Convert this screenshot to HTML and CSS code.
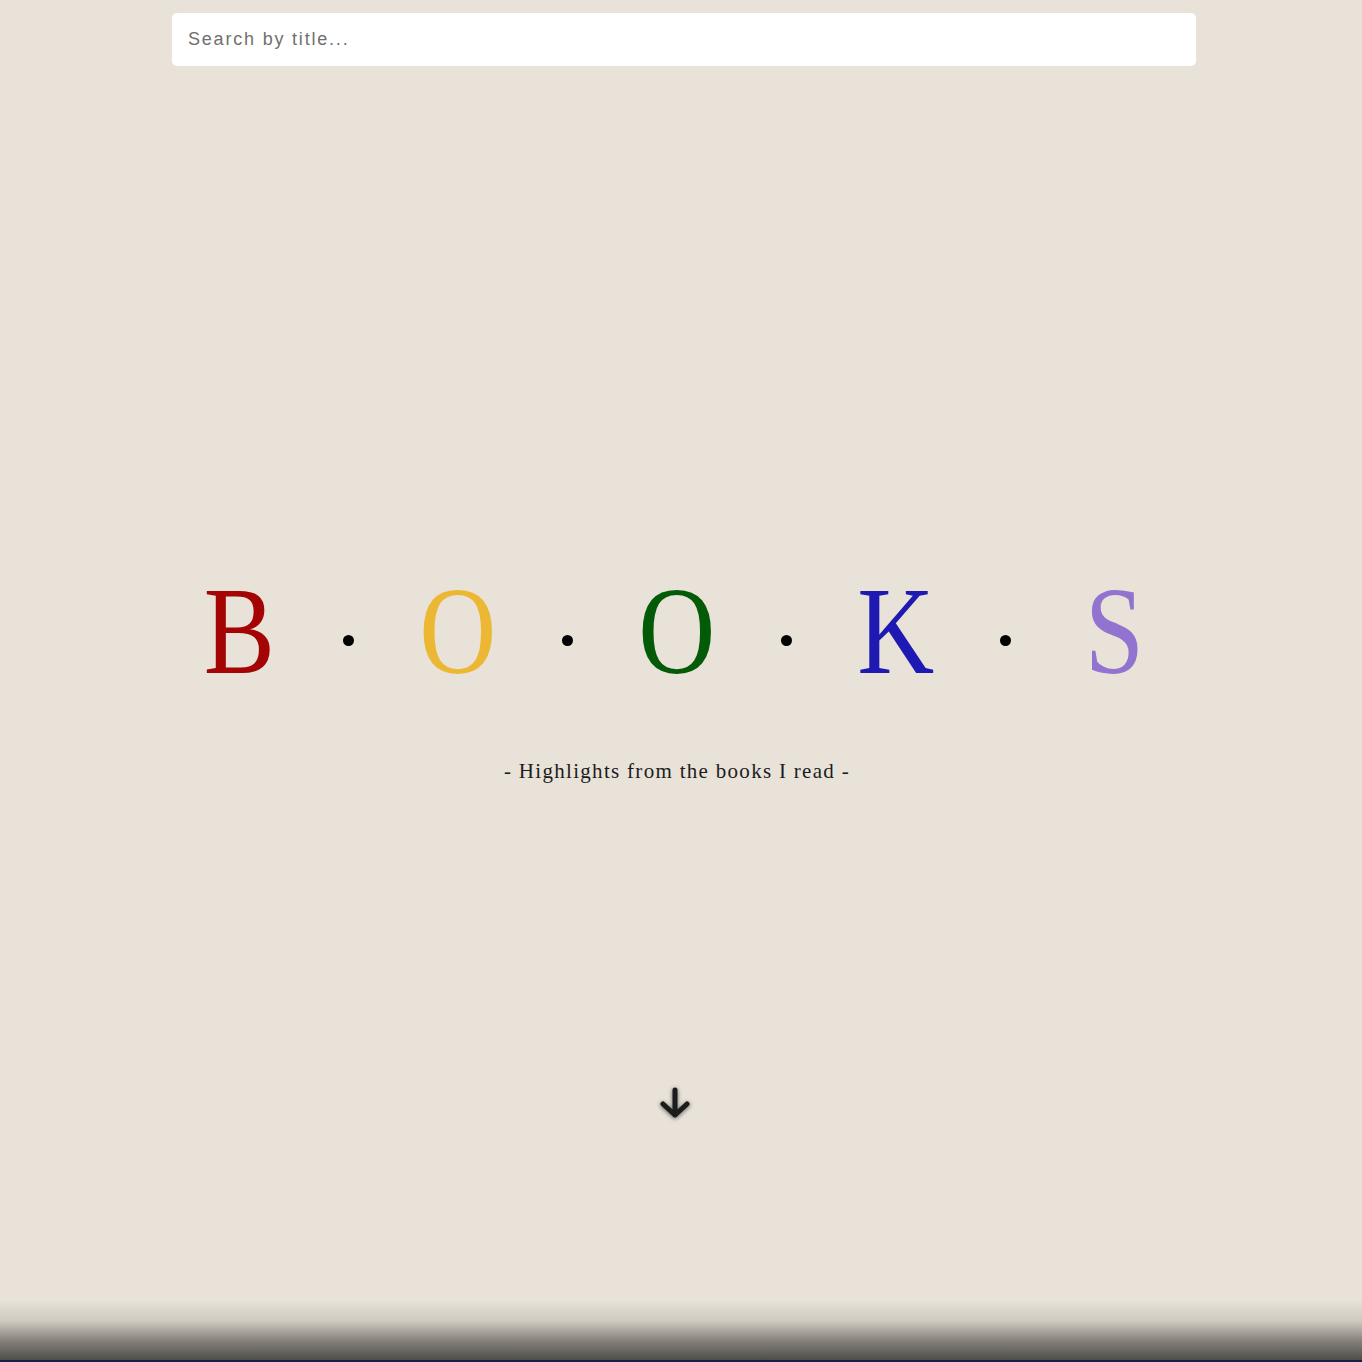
FILE: index.html
```html
<!DOCTYPE html>
<html lang="en">
<head>
<meta charset="utf-8">
<title>Books</title>
<link rel="stylesheet" href="styles.css">
</head>
<body>
<div class="page">
  <header class="search-wrap">
    <input class="search" type="text" placeholder="Search by title...">
  </header>
  <main class="hero">
    <h1 class="title">
      <span class="slot"><span class="letter c-red">B</span></span>
      <span class="slot slot-dot"><span class="dot"></span></span>
      <span class="slot"><span class="letter c-yellow">O</span></span>
      <span class="slot slot-dot"><span class="dot"></span></span>
      <span class="slot"><span class="letter c-green">O</span></span>
      <span class="slot slot-dot"><span class="dot"></span></span>
      <span class="slot"><span class="letter c-blue">K</span></span>
      <span class="slot slot-dot"><span class="dot"></span></span>
      <span class="slot"><span class="letter c-purple">S</span></span>
    </h1>
    <p class="subtitle">- Highlights from the books I read -</p>
    <div class="arrow">
      <svg width="34" height="34" viewBox="0 0 34 34" aria-hidden="true">
        <path d="M17 4 V29 M5 18 L17 29 L29 18" fill="none" stroke="#1c1c1c" stroke-width="5" stroke-linecap="round" stroke-linejoin="round"/>
      </svg>
    </div>
  </main>
  <div class="fade"></div>
  <div class="next-edge"></div>
</div>
</body>
</html>
```

FILE: styles.css
```css
html, body {
  margin: 0;
  padding: 0;
  background: #e8e2d8;
}

.page {
  height: 1362px;
  display: flex;
  flex-direction: column;
  overflow: hidden;
}

.search-wrap {
  display: flex;
  justify-content: center;
  padding: 13px 0 0 6px;
}

.search {
  box-sizing: border-box;
  width: 1024px;
  height: 53px;
  border: none;
  border-radius: 5px;
  background: #ffffff;
  padding: 0 16px;
  font-family: "Liberation Sans", Arial, sans-serif;
  font-size: 18px;
  letter-spacing: 1.8px;
  color: #333;
  outline: none;
}

.search::placeholder {
  color: #6f6f6f;
  opacity: 1;
}

.hero {
  flex: 1;
  display: flex;
  flex-direction: column;
  align-items: center;
  padding-top: 501px;
}

.title {
  margin: 0 8px 0 0;
  display: flex;
  align-items: baseline;
  font-family: "Liberation Serif", "Times New Roman", serif;
  font-weight: normal;
  font-size: 124px;
  line-height: 130px;
  height: 130px;
}

.slot {
  width: 109.4px;
  display: flex;
  justify-content: center;
}

.letter {
  display: inline-block;
  transform: scaleX(0.86);
}

.slot-dot {
  align-self: flex-start;
}

.dot {
  display: block;
  width: 11px;
  height: 11px;
  border-radius: 50%;
  background: #000;
  margin-top: 68px;
}

.c-red { color: #a40404; }
.c-yellow { color: #ecb834; }
.c-green { color: #035b07; }
.c-blue { color: #1f19b4; }
.c-purple { color: #9273cf; }

.subtitle {
  margin: 59px 8px 0 0;
  font-family: "Liberation Serif", "Times New Roman", serif;
  font-size: 21px;
  line-height: 30px;
  letter-spacing: 1.3px;
  color: #1c1c1c;
}

.arrow {
  margin: 300px 12px 0 0;
  width: 34px;
  height: 34px;
  filter: drop-shadow(0 1px 2px rgba(0, 0, 0, 0.6)) blur(0.7px);
}

.fade {
  height: 60px;
  background: linear-gradient(to bottom, rgba(232, 226, 216, 0) 0%, rgba(200, 196, 186, 0.8) 35%, rgba(130, 126, 118, 1) 70%, #4e4e48 100%);
}

.next-edge {
  height: 2px;
  background: #1a1d4a;
}
```
